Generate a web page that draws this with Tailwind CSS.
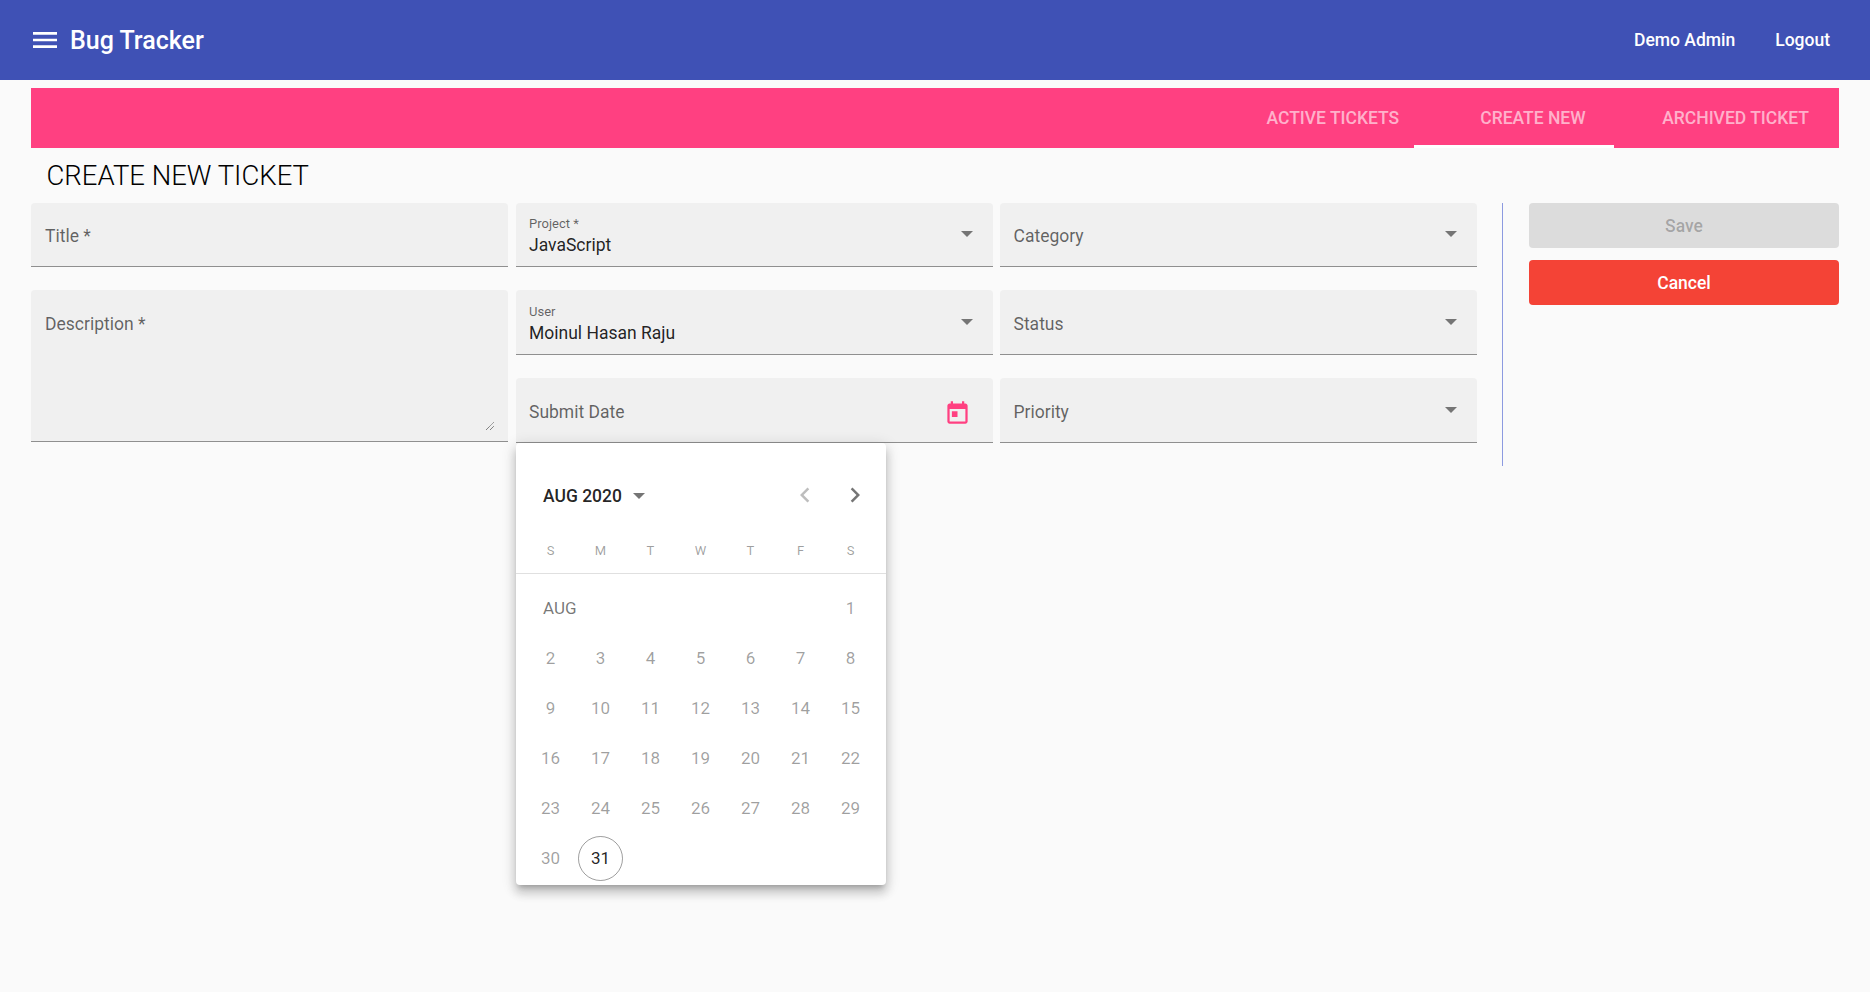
<!DOCTYPE html>
<html lang="en">
<head>
  <meta charset="UTF-8">
  <title>Bug Tracker</title>
  <script src="https://cdn.jsdelivr.net/npm/@tailwindcss/browser@4"></script>
</head>
<body class="bg-[#fafafa] font-[Roboto,sans-serif] h-[992px] overflow-hidden">
  <header class="h-[80px] bg-[#3f51b5] text-white flex items-center">
    <svg class="w-8 h-8 ml-[29px] fill-white" viewBox="0 0 24 24"><path d="M3 18h18v-2H3v2zm0-5h18v-2H3v2zm0-7v2h18V6H3z"/></svg>
    <span class="ml-[9px] text-[25px] font-medium pt-[1px]">Bug Tracker</span>
    <nav class="ml-auto flex gap-[40px] pr-[40px] text-[17.5px] font-medium pt-[1px]">
      <span>Demo Admin</span>
      <span>Logout</span>
    </nav>
  </header>

  <main class="relative px-[31px] pt-2">
    <div class="h-[60px] bg-[#ff4081] flex justify-end items-stretch text-[17.5px] font-medium text-white/60 uppercase">
      <div class="pr-[15px] flex items-center">Active Tickets</div>
      <div class="w-[200px] pl-[66px] flex items-center border-b-[3px] border-white pt-[3px]">Create New</div>
      <div class="pl-[48px] pr-[30px] flex items-center">Archived Ticket</div>
    </div>

    <h1 class="h-[55px] pl-[15.5px] pt-[1px] flex items-center text-[27.5px] font-light text-black">CREATE NEW TICKET</h1>

    <div class="flex items-start">
      <div class="grid grid-cols-[477px_477px_477px] grid-rows-[64px_65px_65px] gap-x-[7.5px] gap-y-[23px] w-[1446px] text-[17.5px] text-black/60">
        <div class="bg-[#f0f0f0] rounded-t border-b border-[#8f8f8f] px-[14px] pt-[4px] flex items-center">Title *</div>
        <div class="bg-[#f0f0f0] rounded-t border-b border-[#8f8f8f] px-[13.5px] pt-[13px] relative flex flex-col">
          <span class="text-[13px] leading-[16px]">Project *</span>
          <span class="text-black/87 leading-[26px]">JavaScript</span>
          <span class="absolute right-[20px] top-[28px] w-0 h-0 border-x-[6px] border-x-transparent border-t-[6px] border-t-[#757575]"></span>
        </div>
        <div class="bg-[#f0f0f0] rounded-t border-b border-[#8f8f8f] px-[13.5px] pt-[3px] relative flex items-center">
          Category
          <span class="absolute right-[20px] top-[28px] w-0 h-0 border-x-[6px] border-x-transparent border-t-[6px] border-t-[#757575]"></span>
        </div>

        <div class="row-span-2 self-start h-[152px] bg-[#f0f0f0] rounded-t border-b border-[#8f8f8f] px-[14px] pt-[21px] relative">
          Description *
          <svg class="absolute right-[13px] bottom-[10px] w-[10px] h-[10px]" viewBox="0 0 10 10"><path d="M1 9 9 1M5 9 9 5" stroke="#555" stroke-width="1" stroke-dasharray="1 0.6" fill="none"/></svg>
        </div>
        <div class="bg-[#f0f0f0] rounded-t border-b border-[#8f8f8f] px-[13.5px] pt-[14px] relative flex flex-col">
          <span class="text-[13px] leading-[16px]">User</span>
          <span class="text-black/87 leading-[26px]">Moinul Hasan Raju</span>
          <span class="absolute right-[20px] top-[29px] w-0 h-0 border-x-[6px] border-x-transparent border-t-[6px] border-t-[#757575]"></span>
        </div>
        <div class="bg-[#f0f0f0] rounded-t border-b border-[#8f8f8f] px-[13.5px] pt-[4px] relative flex items-center">
          Status
          <span class="absolute right-[20px] top-[29px] w-0 h-0 border-x-[6px] border-x-transparent border-t-[6px] border-t-[#757575]"></span>
        </div>

        <div class="bg-[#f0f0f0] rounded-t border-b border-[#8f8f8f] px-[13.5px] pt-[4px] flex items-center justify-between">
          Submit Date
          <svg class="w-[27px] h-[27px] fill-[#ff4081] mr-[8px] mt-[2px]" viewBox="0 0 24 24"><path d="M19 3h-1V1h-2v2H8V1H6v2H5c-1.11 0-1.99.9-1.99 2L3 19c0 1.1.89 2 2 2h14c1.1 0 2-.9 2-2V5c0-1.1-.9-2-2-2zm0 16H5V8h14v11zM7 10h5v5H7z"/></svg>
        </div>
        <div class="bg-[#f0f0f0] rounded-t border-b border-[#8f8f8f] px-[13.5px] pt-[4px] relative flex items-center">
          Priority
          <span class="absolute right-[20px] top-[29px] w-0 h-0 border-x-[6px] border-x-transparent border-t-[6px] border-t-[#757575]"></span>
        </div>
      </div>

      <div class="w-px h-[263px] bg-[#8c9ae0] ml-[25px]"></div>

      <div class="w-[310px] ml-[26px] flex flex-col gap-3 text-[17.5px] font-medium">
        <button class="h-[45px] pt-[2px] rounded bg-[#dcdcdc] text-black/26">Save</button>
        <button class="h-[45px] pt-[2px] rounded bg-[#f44336] text-white">Cancel</button>
      </div>
    </div>

    <!-- date picker popup -->
    <div class="absolute left-[516px] top-[363px] w-[370px] h-[442px] bg-white rounded shadow-[0_5px_5px_-3px_rgba(0,0,0,.2),0_8px_10px_1px_rgba(0,0,0,.14),0_3px_14px_2px_rgba(0,0,0,.12)]">
      <div class="h-[48px] mt-[28px] pl-[27px] flex items-center">
        <span class="text-[17.5px] font-medium text-black/87 pt-[2px]">AUG 2020</span>
        <span class="ml-[11px] mt-[1px] w-0 h-0 border-x-[6px] border-x-transparent border-t-[6px] border-t-[#757575]"></span>
        <svg class="ml-auto w-[30px] h-[30px] fill-black/26" viewBox="0 0 24 24"><path d="M15.41 7.41L14 6l-6 6 6 6 1.41-1.41L10.83 12z"/></svg>
        <svg class="ml-[20px] mr-[16px] w-[30px] h-[30px] fill-black/54" viewBox="0 0 24 24"><path d="M10 6L8.59 7.41 13.17 12l-4.58 4.59L10 18l6-6z"/></svg>
      </div>
      <div class="grid grid-cols-[repeat(7,50px)] pl-[9.5px] pt-[21px] pb-[11px] border-b border-[#e0e0e0] text-[13px] leading-[22px] text-black/38 text-center">
        <span>S</span><span>M</span><span>T</span><span>W</span><span>T</span><span>F</span><span>S</span>
      </div>
      <div class="grid grid-cols-[repeat(7,50px)] auto-rows-[50px] pl-[9.5px] pt-[9px] text-[17px] text-black/38 text-center items-center justify-items-center">
        <span class="col-span-6 justify-self-start pl-[17.5px] pt-[1px] text-black/54">AUG</span><span class="pt-[1px]">1</span>
        <span class="pt-[1px]">2</span><span class="pt-[1px]">3</span><span class="pt-[1px]">4</span><span class="pt-[1px]">5</span><span class="pt-[1px]">6</span><span class="pt-[1px]">7</span><span class="pt-[1px]">8</span>
        <span class="pt-[1px]">9</span><span class="pt-[1px]">10</span><span class="pt-[1px]">11</span><span class="pt-[1px]">12</span><span class="pt-[1px]">13</span><span class="pt-[1px]">14</span><span class="pt-[1px]">15</span>
        <span class="pt-[1px]">16</span><span class="pt-[1px]">17</span><span class="pt-[1px]">18</span><span class="pt-[1px]">19</span><span class="pt-[1px]">20</span><span class="pt-[1px]">21</span><span class="pt-[1px]">22</span>
        <span class="pt-[1px]">23</span><span class="pt-[1px]">24</span><span class="pt-[1px]">25</span><span class="pt-[1px]">26</span><span class="pt-[1px]">27</span><span class="pt-[1px]">28</span><span class="pt-[1px]">29</span>
        <span class="pt-[1px]">30</span>
        <span class="w-[45px] h-[45px] pt-[1px] rounded-full border border-black/38 text-black/87 flex items-center justify-center">31</span>
      </div>
    </div>
  </main>
</body>
</html>
